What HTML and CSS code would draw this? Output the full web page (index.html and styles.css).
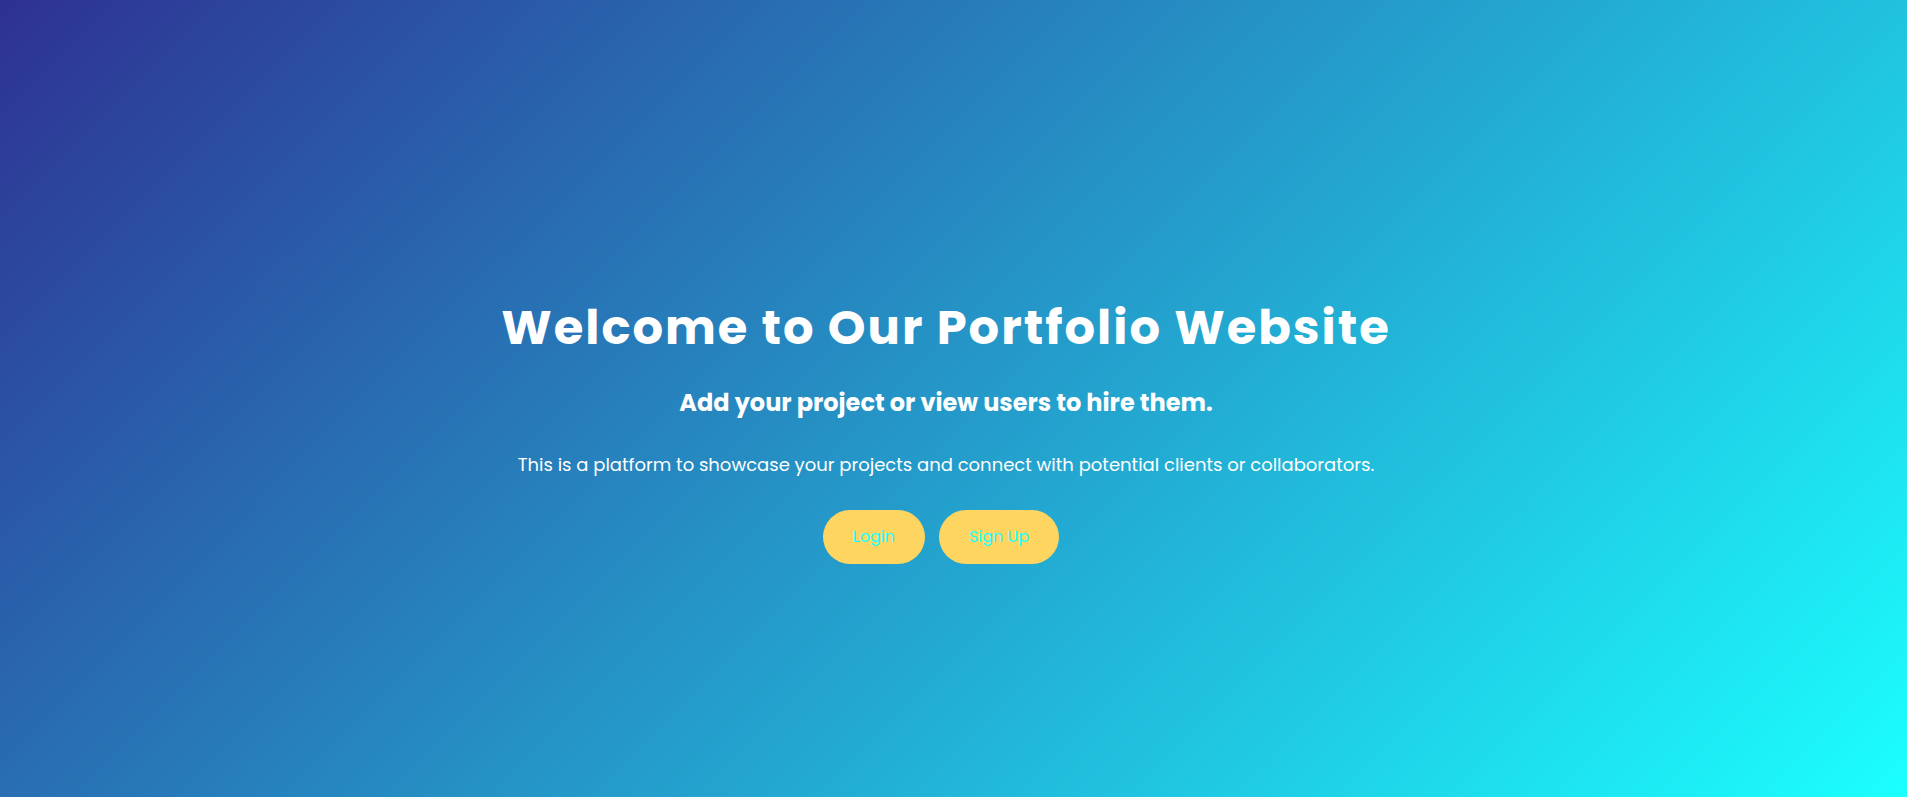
FILE: index.html
```html
<!DOCTYPE html>
<html lang="en">
<head>
<meta charset="utf-8">
<title>Portfolio</title>
<link rel="stylesheet" href="styles.css">
</head>
<body>
<main class="hero">
  <h1 class="hero-title">Welcome to Our Portfolio Website</h1>
  <h2 class="hero-subtitle">Add your project or view users to hire them.</h2>
  <p class="hero-text">This is a platform to showcase your projects and connect with potential clients or collaborators.</p>
  <div class="hero-actions">
    <a class="btn" href="#">Login</a>
    <a class="btn" href="#">Sign Up</a>
  </div>
</main>
</body>
</html>
```

FILE: styles.css
```css
* { box-sizing: border-box; }
html, body {
  margin: 0;
  height: 100%;
}
body {
  background: linear-gradient(135deg, #2e3192 0%, #1bffff 100%);
  font-family: "Poppins", "Open Sans", "DejaVu Sans", sans-serif;
  color: #ffffff;
  overflow: hidden;
}
.hero {
  min-height: 100vh;
  display: flex;
  flex-direction: column;
  align-items: center;
  padding: 294px 15px 0 0;
  text-align: center;
}
.hero-title {
  margin: 0;
  font-size: 48px;
  line-height: 68px;
  font-weight: 700;
  letter-spacing: 2px;
}
.hero-subtitle {
  margin: 23px 0 0;
  font-size: 24px;
  line-height: 36px;
  font-weight: 700;
}
.hero-text {
  margin: 30px 0 0;
  font-size: 18px;
  line-height: 28px;
  font-weight: 400;
}
.hero-actions {
  margin-top: 31px;
  display: flex;
  gap: 4px;
}
.btn {
  display: inline-block;
  margin-right: 10px;
  padding: 15px 30px;
  border-radius: 27px;
  background: #ffd561;
  color: #1bffff;
  font-size: 16px;
  line-height: 24px;
  text-decoration: none;
}
```
